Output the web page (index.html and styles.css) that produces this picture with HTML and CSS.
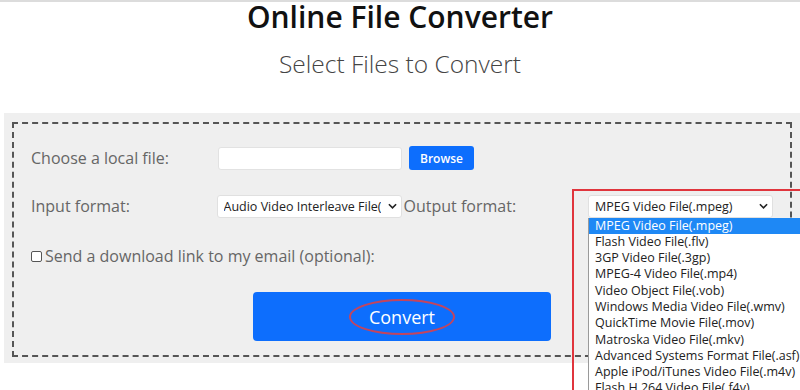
FILE: index.html
```html
<!DOCTYPE html>
<html lang="en">

<head>
    <meta charset="UTF-8">
    <meta name="viewport" content="width=device-width, initial-scale=1.0">
    <title>Online File Converter</title>
    <link rel="stylesheet" href="styles.css">
</head>

<body>
    <!-- Page heading -->
    <header class="page-head">
        <h1>Online File Converter</h1>
        <h2>Select Files to Convert</h2>
    </header>

    <div class="panel">
        <form class="converter">
            <!-- Local file -->
            <div class="row">
                <label class="field-label">Choose a local file:</label>
                <input type="text" class="file-input">
                <button type="button" class="btn-browse">Browse</button>
            </div>

            <!-- Formats -->
            <div class="row">
                <label class="field-label">Input format:</label>
                <div class="select-wrap input-select">
                    <div class="select-box"><span>Audio Video Interleave File(.avi)</span></div>
                    <svg class="chevron" viewBox="0 0 10 6" width="9" height="6"><path d="M1 1l4 4 4-4" fill="none" stroke="#222" stroke-width="1.8"/></svg>
                </div>
                <label class="out-label">Output format:</label>
                <div class="select-wrap output-select">
                    <div class="select-box"><span>MPEG Video File(.mpeg)</span></div>
                    <svg class="chevron" viewBox="0 0 10 6" width="9" height="6"><path d="M1 1l4 4 4-4" fill="none" stroke="#222" stroke-width="1.8"/></svg>

                    <!-- open dropdown -->
                    <ul class="options-list">
                        <li class="selected">MPEG Video File(.mpeg)</li>
                        <li>Flash Video File(.flv)</li>
                        <li>3GP Video File(.3gp)</li>
                        <li>MPEG-4 Video File(.mp4)</li>
                        <li>Video Object File(.vob)</li>
                        <li>Windows Media Video File(.wmv)</li>
                        <li>QuickTime Movie File(.mov)</li>
                        <li>Matroska Video File(.mkv)</li>
                        <li>Advanced Systems Format File(.asf)</li>
                        <li>Apple iPod/iTunes Video File(.m4v)</li>
                        <li>Flash H.264 Video File(.f4v)</li>
                    </ul>
                    <div class="mark-box"></div>
                </div>
            </div>

            <!-- Email -->
            <div class="row email-row">
                <label class="check-label"><span class="check"></span>Send a download link to my email (optional):</label>
            </div>

            <div class="submit-row">
                <button type="button" class="btn-convert"><span class="ring">Convert</span></button>
            </div>
        </form>
    </div>
</body>

</html>
```

FILE: styles.css
```css
html {
    overflow: hidden;
}

body {
    margin: 0;
    height: 388px;
    border-top: 2px solid #dcdcdc;
    background-color: white;
    font-family: "Open Sans", Arial, sans-serif;
    color: #333;
}

.page-head {
    text-align: center;
}

.page-head h1 {
    margin: 0;
    font-size: 30px;
    line-height: 30px;
    font-weight: 600;
    color: #111;
}

.page-head h2 {
    margin: 17px 0 34px;
    font-size: 24.5px;
    line-height: 30px;
    font-weight: 300;
    color: #444;
}

/* Gray panel with dashed inner box */
.panel {
    margin-left: 4px;
    background-color: #efefef;
    padding: 9px 8px 6px;
}

.converter {
    border: 2px dashed #555;
    padding: 22px 17px 14px;
}

.row {
    display: flex;
    align-items: center;
    height: 24px;
    margin-bottom: 24px;
}

.email-row {
    margin-bottom: 24px;
    margin-top: 26px;
}

.field-label {
    width: 187px;
    font-size: 16px;
    color: #666;
}

.file-input {
    box-sizing: border-box;
    width: 184px;
    height: 23px;
    border: 1px solid #e2e2e2;
    border-radius: 3px;
    background-color: white;
    margin: 0 7px 0 0;
}

.btn-browse {
    height: 24px;
    padding: 0 11px;
    border: none;
    border-radius: 3px;
    background-color: #0d6efd;
    color: white;
    font-family: inherit;
    font-size: 12px;
    font-weight: 600;
}

.select-wrap {
    position: relative;
}

.select-box {
    box-sizing: border-box;
    width: 185px;
    height: 23px;
    border: 1px solid #e0e0e0;
    border-radius: 3px;
    background-color: white;
    padding: 0 20px 0 6px;
    font-size: 12.5px;
    line-height: 21px;
    color: #222;
}

.select-box span {
    display: block;
    white-space: nowrap;
    overflow: hidden;
}

.chevron {
    position: absolute;
    right: 5px;
    top: 8px;
}

.out-label {
    width: 186px;
    margin-left: 2px;
    font-size: 16px;
    color: #666;
}

.options-list {
    position: absolute;
    top: 23px;
    left: 0;
    width: 214px;
    margin: 0;
    padding: 0;
    list-style: none;
    background-color: white;
    border-left: 1px solid #9a9a9a;
    z-index: 2;
}

.options-list li {
    padding-left: 6px;
    font-size: 12.5px;
    line-height: 16.3px;
    color: #222;
    white-space: nowrap;
}

.options-list li.selected {
    background-color: #1e88f5;
    color: white;
}

/* red annotation rectangle */
.mark-box {
    position: absolute;
    left: -16px;
    top: -6px;
    width: 240px;
    height: 230px;
    border: 2px solid #e0353d;
    z-index: 3;
}

.check-label {
    display: flex;
    align-items: center;
    font-size: 16px;
    color: #666;
}

.check {
    box-sizing: border-box;
    width: 11px;
    height: 11px;
    border: 1px solid #555;
    border-radius: 2px;
    background-color: white;
    margin-right: 3px;
}

.submit-row {
    display: flex;
    justify-content: center;
}

.btn-convert {
    width: 298px;
    height: 49px;
    border: none;
    border-radius: 4px;
    background-color: #0d6efd;
    color: white;
    font-family: inherit;
    font-size: 18px;
}

.btn-convert .ring {
    display: inline-block;
    padding: 4px 18px;
    border: 2px solid #c3455e;
    border-radius: 50%;
}
```
